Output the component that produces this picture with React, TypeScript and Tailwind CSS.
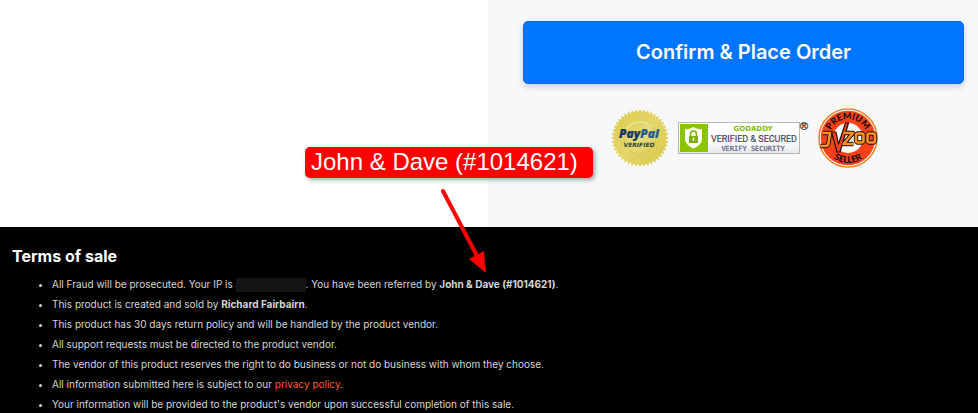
import React from 'react';

function sealPoints(cx: number, cy: number, outer: number, inner: number, teeth: number) {
  const points: string[] = [];
  for (let i = 0; i < teeth * 2; i++) {
    const r = i % 2 === 0 ? outer : inner;
    const a = (Math.PI * i) / teeth;
    points.push(`${(cx + r * Math.cos(a)).toFixed(2)},${(cy + r * Math.sin(a)).toFixed(2)}`);
  }
  return points.join(' ');
}

function PayPalSeal() {
  return (
    <svg width="58" height="58" viewBox="0 0 58 58" role="img" aria-label="PayPal Verified">
      <defs>
        <linearGradient id="gold" x1="0" y1="0" x2="1" y2="1">
          <stop offset="0" stopColor="#dccb50" />
          <stop offset="0.5" stopColor="#e4d668" />
          <stop offset="1" stopColor="#d8c74a" />
        </linearGradient>
        <linearGradient id="goldInner" x1="0" y1="0" x2="1" y2="1">
          <stop offset="0" stopColor="#d9c850" />
          <stop offset="0.5" stopColor="#e8dd7c" />
          <stop offset="1" stopColor="#ddcd58" />
        </linearGradient>
      </defs>
      <polygon points={sealPoints(29, 29, 29, 26, 44)} fill="url(#gold)" />
      <circle cx="29" cy="29" r="16" fill="url(#goldInner)" stroke="#d6c552" strokeWidth="1" />
      <path d="M16 20a16 16 0 0 1 25-2" fill="none" stroke="#efe69c" strokeWidth="1.5" />
      <text x="28" y="29" textAnchor="middle" fontFamily="Open Sans, sans-serif" fontWeight="800" fontStyle="italic" fontSize="12" fill="#17365f" stroke="#17365f" strokeWidth="0.2">
        Pay<tspan fill="#215f92" stroke="#215f92">Pal</tspan>
      </text>
      <text x="28" y="38" textAnchor="middle" fontFamily="DejaVu Sans, sans-serif" fontWeight="700" fontStyle="italic" fontSize="6" fill="#2d4038">
        VERIFIED
      </text>
    </svg>
  );
}

function GoDaddySeal() {
  return (
    <svg width="131" height="34" viewBox="0 0 131 34" role="img" aria-label="GoDaddy Verified and Secured">
      <defs>
        <linearGradient id="plate" x1="0" y1="0" x2="0" y2="1">
          <stop offset="0" stopColor="#ffffff" />
          <stop offset="0.6" stopColor="#ffffff" />
          <stop offset="1" stopColor="#e5e6e8" />
        </linearGradient>
      </defs>
      <rect x="0.5" y="1.5" width="121" height="31" fill="url(#plate)" stroke="#b4b6b8" />
      <rect x="2" y="3" width="28" height="28" fill="#8bc400" />
      <path d="M15.500 6C13 7.800 10.500 8.300 7 8.300v9.500c0 4.700 4 7.700 8.500 9.700 4.500-2 8.500-5 8.500-9.700v-9.500c-3.500 0-6-.5-8.500-2.300z" fill="#fff" />
      <path d="M12.500 15v-2a3 3 0 0 1 6 0v2" fill="none" stroke="#7bb000" strokeWidth="1.600" />
      <rect x="11" y="15" width="9" height="7" rx="0.500" fill="#7bb000" />
      <path d="M15.500 16.500v3.500" stroke="#fff" strokeWidth="1.400" />
      <text x="75" y="10" textAnchor="middle" fontFamily="DejaVu Sans, Verdana, sans-serif" fontWeight="700" fontSize="7" fill="#86bd00">
        GODADDY
      </text>
      <text x="76" y="21" textAnchor="middle" fontFamily="Roboto, sans-serif" fontSize="9" fill="#3f4a58" stroke="#3f4a58" strokeWidth="0.2">
        VERIFIED &amp; SECURED
      </text>
      <text x="75" y="30" textAnchor="middle" fontFamily="DejaVu Sans Mono, monospace" fontSize="7" fill="#56607d" stroke="#56607d" strokeWidth="0.2">
        VERIFY SECURITY
      </text>
      <text x="122" y="9" fontFamily="Liberation Sans, sans-serif" fontSize="11" fill="#111" stroke="#111" strokeWidth="0.2">
        ®
      </text>
    </svg>
  );
}

function JVZooSeal() {
  return (
    <svg width="60" height="60" viewBox="0 0 60 60" role="img" aria-label="JVZoo Premium Seller">
      <defs>
        <path id="arcTop" d="M11 30a19 19 0 0 1 38 0" />
        <path id="arcBottom" d="M5 30a25 25 0 0 0 50 0" />
      </defs>
      <circle cx="30" cy="30" r="29" fill="#fff" stroke="#f58220" strokeWidth="1.600" />
      <circle cx="30" cy="30" r="27.300" fill="#fc4119" />
      <circle cx="30" cy="30" r="15" fill="#fff" />
      <g fontFamily="Lato, sans-serif" fontWeight="900" fontSize="9" fill="#190a05" textAnchor="middle">
        <text>
          <textPath href="#arcTop" startOffset="50%">PREMIUM</textPath>
        </text>
        <text>
          <textPath href="#arcBottom" startOffset="50%">SELLER</textPath>
        </text>
      </g>
      <g fill="none" strokeLinejoin="round">
        <g stroke="#1c0c05" strokeWidth="4.400">
          <path d="M5 25h7l-1.500 10q-.500 3-3 3H2.500" />
          <path d="M25.500 25h9.500l-9.500 11h10" />
          <rect x="38" y="25.500" width="7.500" height="9" rx="2" />
          <rect x="49.500" y="25.500" width="7.500" height="9" rx="2" />
        </g>
        <path d="M13.500 24h4.500l2.500 12 7-21h3L22 44h-3z" fill="#fc4119" stroke="#1c0c05" strokeWidth="1.200" />
        <g stroke="#f9921f" strokeWidth="2.600">
          <path d="M5 25h7l-1.500 10q-.500 3-3 3H2.500" />
          <path d="M25.500 25h9.500l-9.500 11h10" />
          <rect x="38" y="25.500" width="7.500" height="9" rx="2" />
          <rect x="49.500" y="25.500" width="7.500" height="9" rx="2" />
        </g>
      </g>
    </svg>
  );
}

function Callout() {
  return (
    <>
      <div className="absolute left-[305px] top-[147px] h-[31px] w-[288px] rounded-[5px] bg-[#ff0000] px-1.5 font-['Liberation_Sans',Arial,sans-serif] text-2xl leading-[30px] whitespace-nowrap text-white shadow-[2px_2px_4px_rgba(0,0,0,0.35)]">
        John &amp; Dave (#1014621)
      </div>
      <svg className="absolute left-[438px] top-[186px]" width="52" height="90" viewBox="0 0 52 90" aria-hidden="true">
        <path d="M5 5L39 70" stroke="#f00" strokeWidth="4" strokeLinecap="round" />
        <path d="M31 73l15-8 2 22z" fill="#f00" />
      </svg>
    </>
  );
}

function TermsOfSale() {
  return (
    <footer className="overflow-hidden bg-black px-3 pt-4 text-[#d6d6d6]">
      <h2 className="text-base leading-[26px] font-bold text-white">Terms of sale</h2>
      <ul className="mt-[5px] list-disc pl-10 text-[10px] leading-5 whitespace-nowrap">
        <li>
          All Fraud will be prosecuted. Your IP is{' '}
          <span className="inline-block h-3.5 w-[70px] bg-[#131415] align-middle" />. You have been referred by{' '}
          <strong className="font-bold">John &amp; Dave (#1014621)</strong>.
        </li>
        <li>
          This product is created and sold by <strong className="font-bold">Richard Fairbairn</strong>.
        </li>
        <li>This product has 30 days return policy and will be handled by the product vendor.</li>
        <li>All support requests must be directed to the product vendor.</li>
        <li>The vendor of this product reserves the right to do business or not do business with whom they choose.</li>
        <li>
          All information submitted here is subject to our{' '}
          <a href="#privacy" className="text-[#ff5a1f]">
            privacy policy
          </a>
          .
        </li>
        <li>Your information will be provided to the product&apos;s vendor upon successful completion of this sale.</li>
      </ul>
    </footer>
  );
}

export default function App() {
  return (
    <div className="relative flex h-screen flex-col overflow-hidden bg-black font-[Inter,sans-serif]">
      <main className="grid shrink-0 grid-cols-[488fr_490fr] bg-white">
        <div />
        <section className="bg-[#f7f8fa] pt-[21px] pr-3.5 pb-[59px] pl-[35px]">
          <button
            type="button"
            className="h-[63px] w-full rounded-[5px] border border-[#0069e6] bg-[#0075ff] pb-0.5 text-xl font-semibold text-white shadow-[0_3px_6px_rgba(0,0,0,0.16)]"
          >
            Confirm &amp; Place Order
          </button>
          <div className="mt-6 flex items-center justify-center gap-[9px] pl-0.5">
            <PayPalSeal />
            <GoDaddySeal />
            <JVZooSeal />
          </div>
        </section>
      </main>
      <TermsOfSale />
      <Callout />
    </div>
  );
}
